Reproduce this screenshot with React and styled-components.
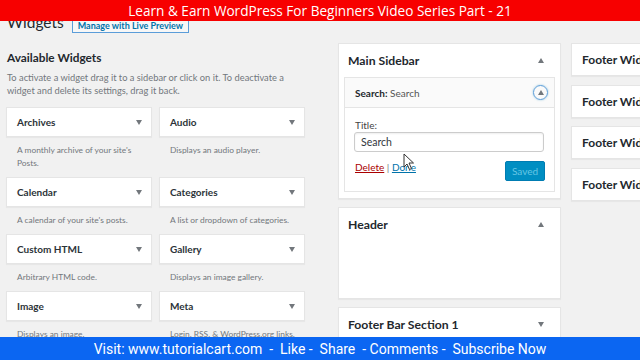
import React from 'react';
import styled, {createGlobalStyle} from 'styled-components';

const GlobalStyle = createGlobalStyle`
    html, body {
        margin: 0;
        padding: 0;
        background: #f1f1f1;
        overflow: hidden;
    }
    body {
        font-family: Lato, "Open Sans", sans-serif;
        color: #23282d;
    }
`;

const widgets = [
    {name: 'Archives', desc: "A monthly archive of your site's Posts."},
    {name: 'Audio', desc: 'Displays an audio player.'},
    {name: 'Calendar', desc: "A calendar of your site's posts."},
    {name: 'Categories', desc: 'A list or dropdown of categories.'},
    {name: 'Custom HTML', desc: 'Arbitrary HTML code.'},
    {name: 'Gallery', desc: 'Displays an image gallery.'},
    {name: 'Image', desc: 'Displays an image.'},
    {name: 'Meta', desc: 'Login, RSS, & WordPress.org links.'},
];

const footerWidgets = ['Footer Widget 1', 'Footer Widget 2', 'Footer Widget 3', 'Footer Widget 4'];

export const App = () => {
    return <>
        <GlobalStyle/>
        <Page>
            <TopBanner>Learn &amp; Earn WordPress For Beginners Video Series Part - 21</TopBanner>
            <Wrap>
                <TitleRow>
                    <H1>Widgets</H1>
                    <PageAction>Manage with Live Preview</PageAction>
                </TitleRow>
                <Columns>
                    <LeftCol>
                        <SectionTitle>Available Widgets</SectionTitle>
                        <Intro>To activate a widget drag it to a sidebar or click on it. To deactivate a widget and delete its settings, drag it back.</Intro>
                        <Grid>
                            {widgets.map(w =>
                                <Cell key={w.name}>
                                    <WidgetBox>
                                        <span>{w.name}</span>
                                        <Arrow/>
                                    </WidgetBox>
                                    <WidgetDesc>{w.desc}</WidgetDesc>
                                </Cell>
                            )}
                        </Grid>
                    </LeftCol>

                    <SidebarCol>
                        <Sidebar>
                            <SidebarHead>
                                <span>Main Sidebar</span>
                                <Arrow up/>
                            </SidebarHead>
                            <OpenWidget>
                                <OpenHead>
                                    <span><b>Search:</b> Search</span>
                                    <ToggleCircle><Arrow up/></ToggleCircle>
                                </OpenHead>
                                <OpenBody>
                                    <Label>Title:</Label>
                                    <Input defaultValue="Search"/>
                                    <Controls>
                                        <Links>
                                            <DeleteLink>Delete</DeleteLink> | <DoneLink>Done</DoneLink>
                                        </Links>
                                        <SavedButton disabled>Saved</SavedButton>
                                    </Controls>
                                </OpenBody>
                            </OpenWidget>
                            <Cursor width="12" height="18" viewBox="0 0 12 18">
                                <path d="M1 1 L1 14 L4 11 L6.5 16.5 L8.5 15.5 L6 10 L10.5 10 Z" fill="#fff" stroke="#333" strokeWidth="1" strokeLinejoin="round"/>
                            </Cursor>
                        </Sidebar>
                        <Sidebar $tall>
                            <SidebarHead>
                                <span>Header</span>
                                <Arrow up/>
                            </SidebarHead>
                        </Sidebar>
                        <Sidebar>
                            <SidebarHead>
                                <span>Footer Bar Section 1</span>
                                <Arrow/>
                            </SidebarHead>
                        </Sidebar>
                    </SidebarCol>

                    <FooterCol>
                        {footerWidgets.map(f => <FooterBox key={f}>{f}</FooterBox>)}
                    </FooterCol>
                </Columns>
            </Wrap>
            <BottomBar>Visit: www.tutorialcart.com&nbsp; - &nbsp;Like - &nbsp;Share &nbsp;- Comments - &nbsp;Subscribe Now</BottomBar>
        </Page>
    </>
}

export default App;

const Page = styled.div`
    position: relative;
    width: 640px;
    height: 360px;
    overflow: hidden;
`

const TopBanner = styled.div`
    position: absolute;
    top: 0;
    left: 0;
    right: 0;
    height: 21px;
    background: #f70000;
    color: #fff;
    font-family: "Open Sans", sans-serif;
    font-size: 13.6px;
    line-height: 21px;
    text-align: center;
    z-index: 5;
`

const BottomBar = styled.div`
    position: absolute;
    left: 0;
    right: 0;
    bottom: 0;
    height: 23px;
    background: #0b66f2;
    color: #fff;
    font-family: Roboto, sans-serif;
    font-size: 14px;
    line-height: 24px;
    text-align: center;
    white-space: nowrap;
    z-index: 5;
`

const Wrap = styled.div`
    padding: 6px 0 0 6px;
`

const TitleRow = styled.div`
    display: flex;
    align-items: flex-end;
    height: 29px;
    padding-left: 1px;
`

const H1 = styled.h1`
    margin: 0;
    font-size: 15.5px;
    font-weight: 400;
    line-height: 26px;
    color: #23282d;
`

const PageAction = styled.span`
    margin: 0 0 2px 8px;
    height: 14px;
    box-sizing: border-box;
    padding: 0 5px;
    border: 1px solid #5b9dd9;
    background: #f7f7f7;
    color: #0073aa;
    font-size: 9px;
    font-weight: 700;
    line-height: 12px;
    white-space: nowrap;
`

const Columns = styled.div`
    display: flex;
    align-items: flex-start;
`

const LeftCol = styled.div`
    width: 299px;
    flex-shrink: 0;
    padding-top: 14px;
`

const SectionTitle = styled.h2`
    margin: 0 0 0 1px;
    font-size: 11.8px;
    font-weight: 700;
    line-height: 18px;
`

const Intro = styled.p`
    margin: 5px 0 10px 1px;
    font-size: 9.3px;
    line-height: 12.5px;
    color: #72777c;
`

const Grid = styled.div`
    display: grid;
    grid-template-columns: 146px 146px;
    column-gap: 7px;
`

const Cell = styled.div`
    display: flex;
    flex-direction: column;
`

const WidgetBox = styled.div`
    height: 30px;
    box-sizing: border-box;
    display: flex;
    align-items: center;
    justify-content: space-between;
    padding: 0 9px 0 10px;
    background: #fff;
    border: 1px solid #e5e5e5;
    box-shadow: 0 1px 1px rgba(0, 0, 0, .04);
    font-size: 10px;
    font-weight: 700;
    color: #2c3338;
`

const WidgetDesc = styled.div`
    margin: 7px 0 7px;
    padding: 0 4px 0 11px;
    font-size: 8.4px;
    line-height: 13px;
    color: #72777c;
`

const Arrow = styled.i`
    width: 0;
    height: 0;
    border-left: 3.5px solid transparent;
    border-right: 3.5px solid transparent;
    ${p => p.up ? 'border-bottom: 5px solid #72777c;' : 'border-top: 5px solid #72777c;'}
`

const SidebarCol = styled.div`
    width: 223px;
    flex-shrink: 0;
    margin: 8px 0 0 33px;
    display: flex;
    flex-direction: column;
    gap: 8px;
`

const Sidebar = styled.div`
    position: relative;
    background: #fff;
    border: 1px solid #e5e5e5;
    box-shadow: 0 1px 1px rgba(0, 0, 0, .04);
    padding-bottom: 6px;
    min-height: ${p => p.$tall ? '84px' : '0'};
`

const SidebarHead = styled.div`
    height: 33px;
    display: flex;
    align-items: center;
    justify-content: space-between;
    padding: 0 16px 0 9px;
    font-size: 12.2px;
    font-weight: 700;
`

const OpenWidget = styled.div`
    margin: 0 5px;
    border: 1px solid #e5e5e5;
`

const OpenHead = styled.div`
    height: 29px;
    display: flex;
    align-items: center;
    justify-content: space-between;
    padding: 0 6px 0 10px;
    background: #fafafa;
    border-bottom: 1px solid #e5e5e5;
    font-size: 10px;
    color: #555;
    b {
        color: #23282d;
        font-weight: 700;
    }
`

const ToggleCircle = styled.span`
    width: 13px;
    height: 13px;
    border: 1.5px solid #5b9dd9;
    border-radius: 50%;
    display: flex;
    align-items: center;
    justify-content: center;
    box-shadow: 0 0 2px rgba(30, 140, 190, .5);
`

const OpenBody = styled.div`
    padding: 11px 10px 10px 10px;
`

const Label = styled.div`
    font-size: 10px;
    line-height: 13px;
    color: #444;
`

const Input = styled.input`
    display: block;
    box-sizing: border-box;
    width: 190px;
    height: 20px;
    margin: 0 0 9px -1px;
    padding: 0 6px;
    border: 1px solid #ccc;
    border-radius: 3px;
    box-shadow: inset 0 1px 2px rgba(0, 0, 0, .07);
    font-family: Lato, sans-serif;
    font-size: 10.5px;
    color: #32373c;
    outline: none;
`

const Controls = styled.div`
    width: 190px;
    display: flex;
    justify-content: space-between;
    align-items: flex-start;
`

const Links = styled.div`
    font-size: 10px;
    line-height: 13px;
    color: #72777c;
`

const DeleteLink = styled.a`
    color: #a00;
    text-decoration: underline;
`

const DoneLink = styled.a`
    color: #0073aa;
    text-decoration: underline;
`

const SavedButton = styled.button`
    width: 40px;
    height: 20px;
    padding: 0;
    background: #008ec2;
    border: 1px solid #007cb2;
    border-radius: 2px;
    color: #66c6e4;
    font-family: Lato, sans-serif;
    font-size: 10px;
`

const Cursor = styled.svg`
    position: absolute;
    left: 64px;
    top: 109px;
`

const FooterCol = styled.div`
    width: 200px;
    flex-shrink: 0;
    margin: 8px 0 0 10px;
    display: flex;
    flex-direction: column;
    gap: 8.5px;
`

const FooterBox = styled.div`
    height: 33px;
    box-sizing: border-box;
    display: flex;
    align-items: center;
    padding-left: 10px;
    background: #fff;
    border: 1px solid #e5e5e5;
    box-shadow: 0 1px 1px rgba(0, 0, 0, .04);
    font-size: 12px;
    font-weight: 700;
    white-space: nowrap;
`
